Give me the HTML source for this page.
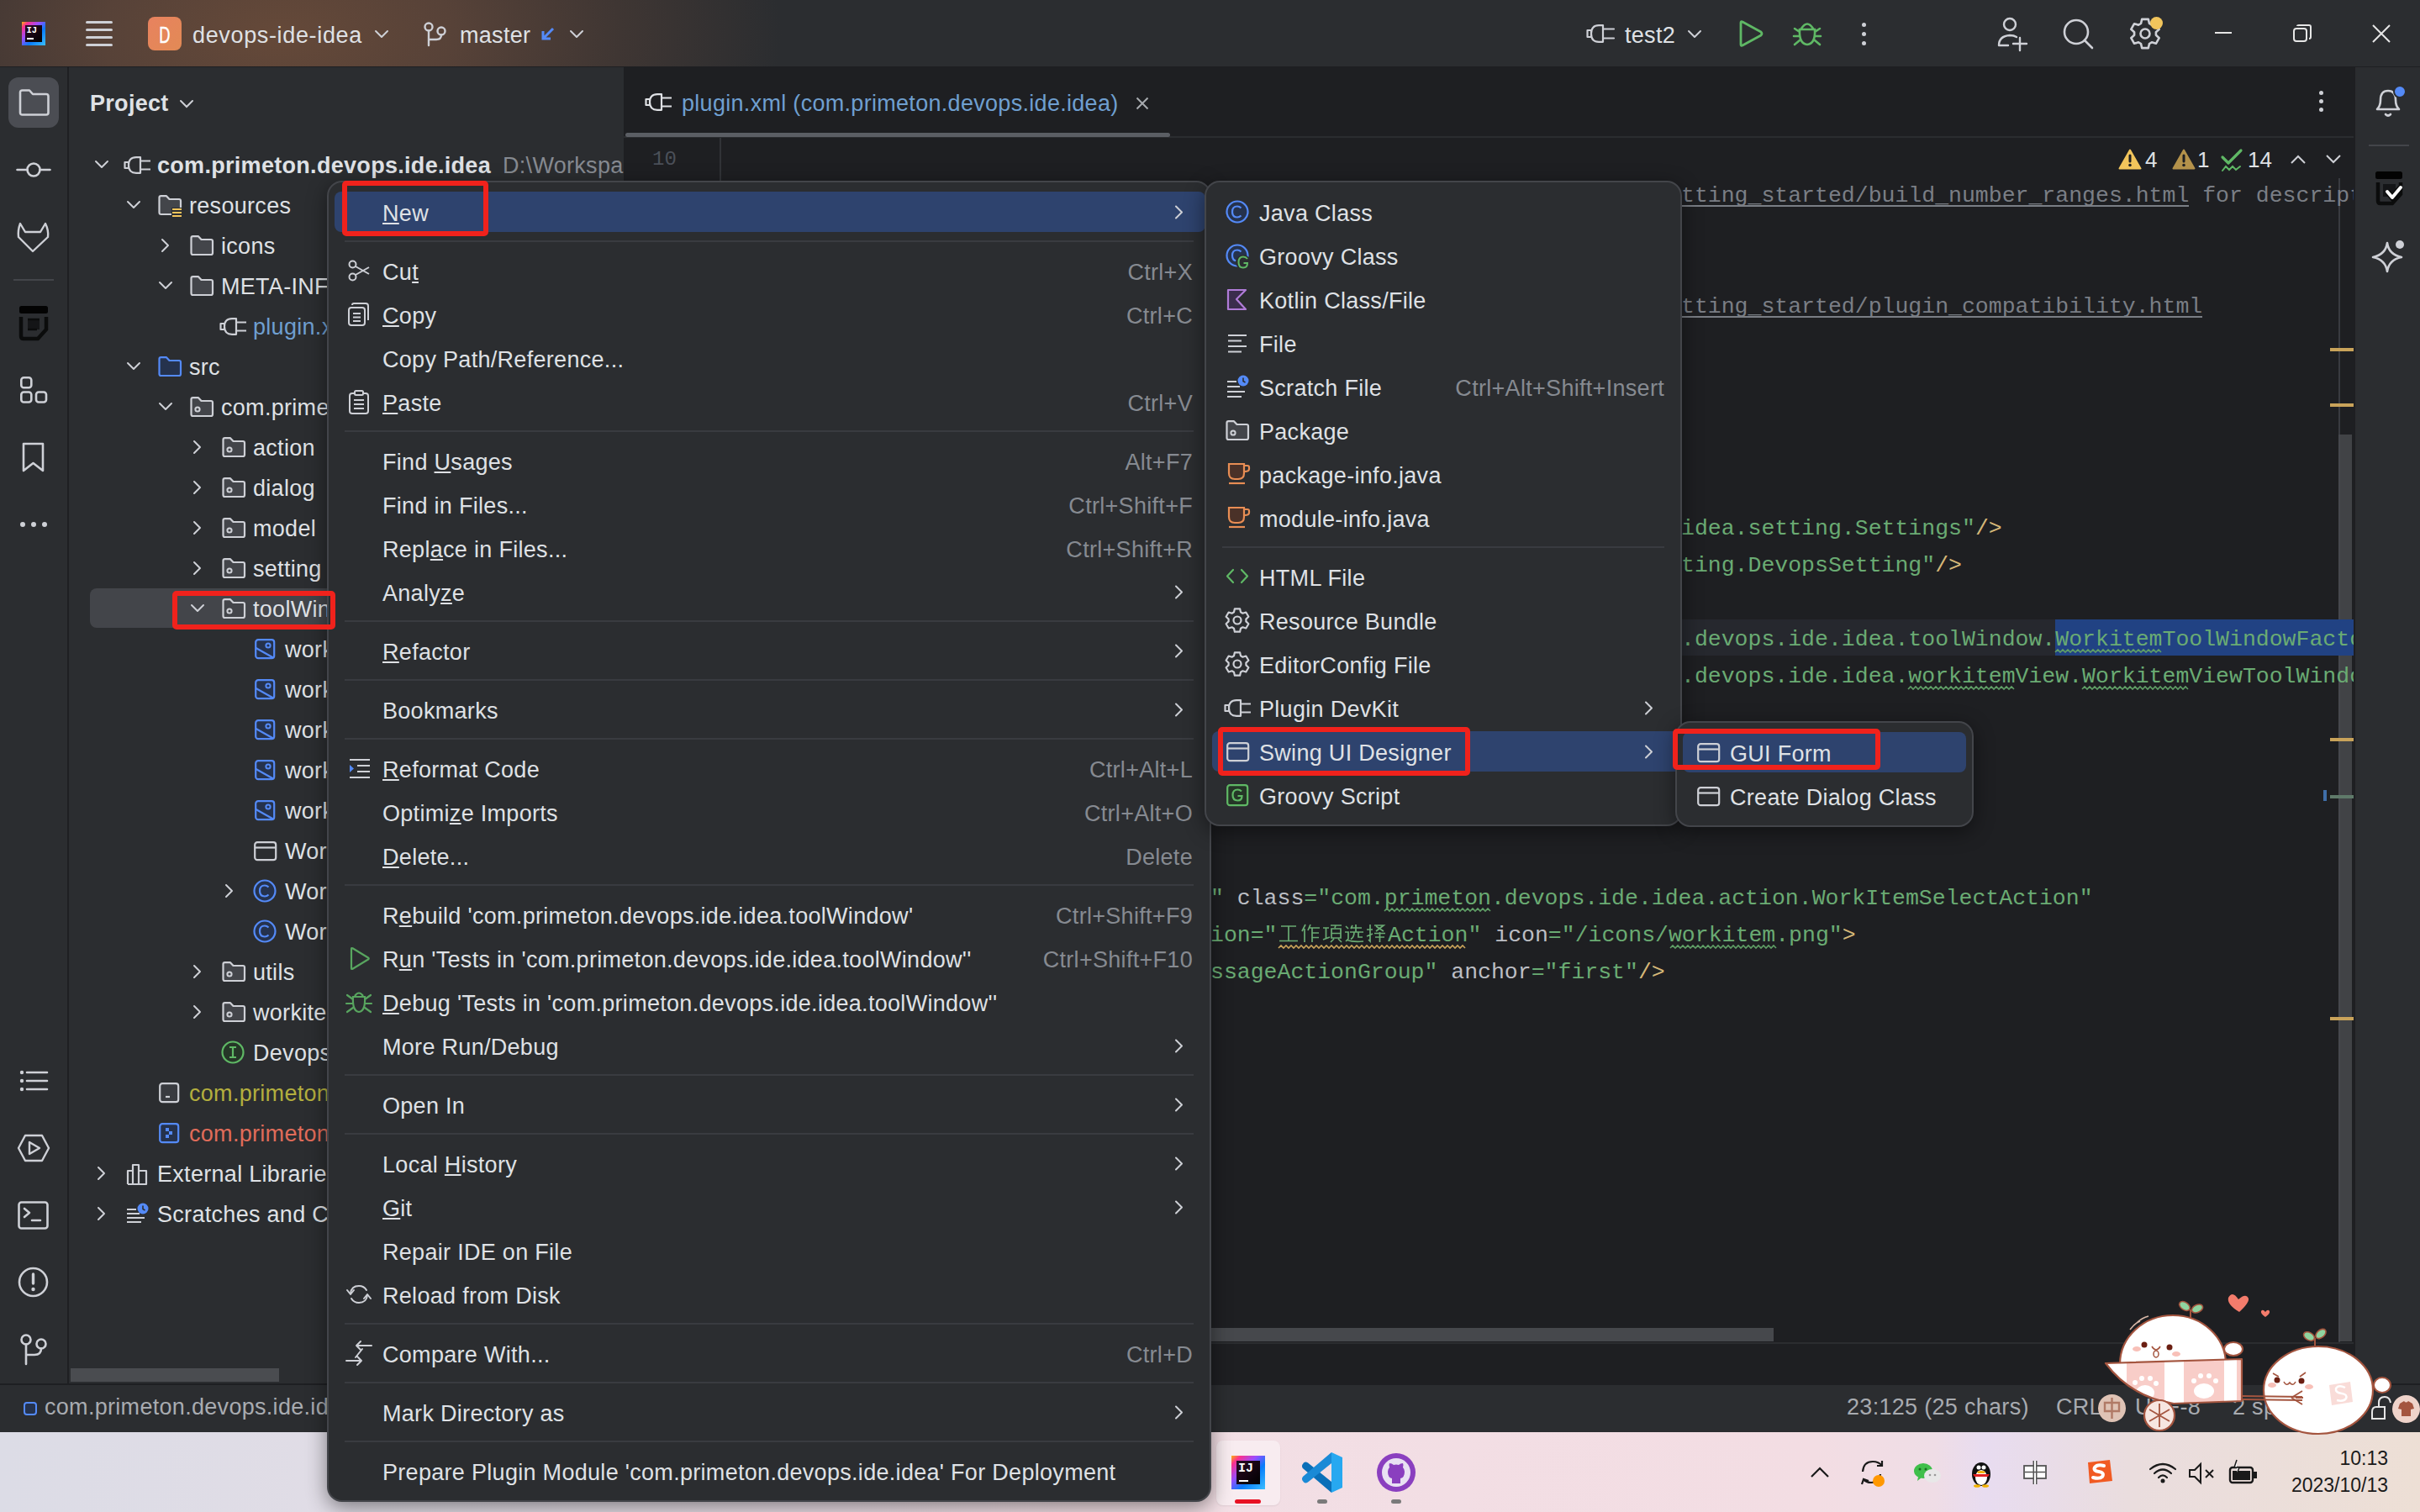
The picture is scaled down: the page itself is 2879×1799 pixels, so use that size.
<!DOCTYPE html>
<html><head><meta charset="utf-8">
<style>
*{box-sizing:border-box;margin:0;padding:0}
html,body{width:2879px;height:1799px;overflow:hidden;background:#2b2d30}
body{position:relative;font-family:"Liberation Sans",sans-serif;color:#dfe1e5;font-size:27px}
.a{position:absolute}
.t{position:absolute;white-space:pre;line-height:1}
.mono{font-family:"Liberation Mono",monospace}
svg{position:absolute;overflow:visible}
.ic{fill:none;stroke:#ced0d6;stroke-width:2.4;stroke-linecap:round;stroke-linejoin:round}
</style></head><body>
<!-- TITLE BAR -->
<div class="a" style="left:0;top:0;width:2879px;height:80px;background:#2b2d30"></div>
<div class="a" style="left:0;top:0;width:1100px;height:80px;background:radial-gradient(ellipse 600px 300px at 330px 40px,#654939 0%,#574238 35%,#3f3633 68%,rgba(43,45,48,0) 100%)"></div>
<div class="a" style="left:0;top:79px;width:2879px;height:1px;background:#1e1f22"></div>
<!-- IJ logo -->
<div class="a" style="left:26px;top:26px;width:28px;height:28px;background:linear-gradient(135deg,#fdb60d 0%,#fc318c 14%,#9b4dff 38%,#087cfa 62%,#3bbfff 100%)"></div>
<div class="a" style="left:30px;top:30px;width:20px;height:20px;background:linear-gradient(135deg,#2a0a24,#000)"></div>
<div class="t mono" style="left:31.5px;top:31px;font-size:10.5px;font-weight:bold;color:#fff">IJ</div>
<div class="a" style="left:32px;top:45px;width:8px;height:2px;background:#fff"></div>
<!-- hamburger -->
<div class="a" style="left:102px;top:25px;width:32px;height:3px;background:#ced0d6;border-radius:2px"></div>
<div class="a" style="left:102px;top:34px;width:32px;height:3px;background:#ced0d6;border-radius:2px"></div>
<div class="a" style="left:102px;top:43px;width:32px;height:3px;background:#ced0d6;border-radius:2px"></div>
<div class="a" style="left:102px;top:52px;width:32px;height:3px;background:#ced0d6;border-radius:2px"></div>
<!-- D badge -->
<div class="a" style="left:176px;top:20px;width:40px;height:40px;border-radius:8px;background:linear-gradient(135deg,#e8825f,#e28a55)"></div>
<div class="t" style="left:176px;top:29px;width:40px;text-align:center;font-size:27px;color:#fff;transform:scaleX(0.68);-webkit-text-stroke:0.4px #fff">D</div>
<div class="t" style="left:229px;top:29px;font-size:27px;color:#dfe1e5;letter-spacing:0.65px">devops-ide-idea</div>
<svg style="left:446px;top:36px" width="16" height="9"><path d="M1 1 L8 8 L15 1" class="ic" style="stroke-width:2"/></svg>
<!-- branch -->
<svg style="left:504px;top:26px" width="28" height="30"><circle cx="6" cy="6" r="4.5" class="ic"/><circle cx="21" cy="11" r="4.5" class="ic"/><path d="M6 10.5 V28 M21 15.5 Q21 21 15 21 H6" class="ic"/></svg>
<div class="t" style="left:547px;top:29px;font-size:27px;letter-spacing:0.3px">master</div>
<svg style="left:643px;top:32px" width="18" height="18"><path d="M15 2 L3 14 M3 5 V14 H12" fill="none" stroke="#548af7" stroke-width="3"/></svg>
<svg style="left:678px;top:36px" width="16" height="9"><path d="M1 1 L8 8 L15 1" class="ic" style="stroke-width:2"/></svg>
<!-- run config -->
<svg style="left:1887px;top:29px" width="34" height="22"><path d="M1.5 7 H6 V15 H1.5 Z M20 1.2 H15 Q6 1.2 6 11 Q6 20.8 15 20.8 H20 Z M20 5.5 H33 M20 16.5 H33" class="ic" style="stroke-width:2.2"/></svg>
<div class="t" style="left:1933px;top:29px;font-size:27px;letter-spacing:0.3px">test2</div>
<svg style="left:2008px;top:36px" width="16" height="9"><path d="M1 1 L8 8 L15 1" class="ic" style="stroke-width:2"/></svg>
<svg style="left:2068px;top:24px" width="30" height="32"><path d="M3 3 Q3 1 5 2 L27 14 Q29 16 27 18 L5 30 Q3 31 3 29 Z" fill="none" stroke="#5fb865" stroke-width="2.8" stroke-linejoin="round"/></svg>
<svg style="left:2133px;top:24px" width="34" height="32"><path d="M10 10 Q17 -1 24 10 M8 11 H26 Q27 28 17 29 Q7 28 8 11 Z M2 10 L8 14 M32 10 L26 14 M1 19 H8 M33 19 H26 M2 29 L8 24 M32 29 L26 24" fill="none" stroke="#5fb865" stroke-width="2.6" stroke-linecap="round"/></svg>
<div class="a" style="left:2215px;top:27px;width:5px;height:5px;border-radius:50%;background:#ced0d6"></div>
<div class="a" style="left:2215px;top:38px;width:5px;height:5px;border-radius:50%;background:#ced0d6"></div>
<div class="a" style="left:2215px;top:49px;width:5px;height:5px;border-radius:50%;background:#ced0d6"></div>
<!-- right icons -->
<svg style="left:2376px;top:21px" width="40" height="40"><circle cx="15" cy="8" r="7" class="ic"/><path d="M2 33 Q2 22 15 21 Q20 21 23 23 M2 33 H13 M27 24 V39 M19 31 H35" class="ic"/></svg>
<svg style="left:2455px;top:23px" width="38" height="38"><circle cx="15" cy="15" r="14" class="ic" style="stroke-width:2.6"/><path d="M25 25 L34 34" class="ic" style="stroke-width:2.6"/></svg>
<svg style="left:2534px;top:21px" width="40" height="40"><path d="M13.0 7.0 L14.2 1.9 L21.8 1.9 L23.0 7.0 L25.9 8.7 L30.9 7.2 L34.7 13.8 L30.9 17.3 L30.9 20.7 L34.7 24.2 L30.9 30.8 L25.9 29.3 L23.0 31.0 L21.8 36.1 L14.2 36.1 L13.0 31.0 L10.1 29.3 L5.1 30.8 L1.3 24.2 L5.1 20.7 L5.1 17.3 L1.3 13.8 L5.1 7.2 L10.1 8.7 Z" class="ic" style="stroke-width:2.6"/><circle cx="18" cy="19" r="5.5" class="ic" style="stroke-width:2.6"/></svg>
<div class="a" style="left:2558px;top:20px;width:15px;height:15px;border-radius:50%;background:#f2c55c"></div>
<div class="a" style="left:2635px;top:38px;width:20px;height:2px;background:#e6e6e6"></div>
<svg style="left:2728px;top:29px" width="24" height="24"><rect x="1" y="5" width="15" height="15" rx="3" fill="none" stroke="#e6e6e6" stroke-width="2"/><path d="M5 2 Q5 1 7 1 H19 Q21 1 21 3 V15 Q21 17 19 17" fill="none" stroke="#e6e6e6" stroke-width="2"/></svg>
<svg style="left:2822px;top:29px" width="22" height="22"><path d="M1 1 L21 21 M21 1 L1 21" stroke="#e6e6e6" stroke-width="2"/></svg>
<div class="a" style="left:0;top:80px;width:80px;height:1570px;background:#2b2d30"></div>
<div class="a" style="left:80px;top:80px;width:2px;height:1570px;background:#1e1f22"></div>
<div class="a" style="left:82px;top:80px;width:660px;height:1570px;background:#2b2d30;overflow:hidden" id="proj">
<div class="a" style="left:25px;top:620px;width:700px;height:47px;background:#43454a;border-radius:8px"></div><svg style="left:31px;top:111px" width="16" height="10"><path d="M1 1 L8 8 L15 1" fill="none" stroke="#ced0d6" stroke-width="2" stroke-linecap="round" stroke-linejoin="round"/></svg><svg style="left:65px;top:106px" width="34" height="22"><path d="M1.5 7 H6 V14 H1.5 Z M20 1.2 H15 Q6 1.2 6 10.5 Q6 19.8 15 19.8 H20 Z M20 5.5 H32 M20 15.5 H32" fill="none" stroke="#ced0d6" stroke-width="2.2" stroke-linejoin="round"/></svg><div class="t" style="left:105px;top:104px;font-size:27px;color:#dfe1e5;letter-spacing:0.3px;font-weight:bold;">com.primeton.devops.ide.idea</div><div class="t" style="left:516px;top:104px;font-size:27px;color:#868a91;letter-spacing:0.3px;">D:\Workspace\devops-ide-idea</div><svg style="left:69px;top:159px" width="16" height="10"><path d="M1 1 L8 8 L15 1" fill="none" stroke="#ced0d6" stroke-width="2" stroke-linecap="round" stroke-linejoin="round"/></svg><svg style="left:106px;top:152px" width="30" height="26"><path d="M1.5 3 Q1.5 1.2 3.5 1.2 H10 L13.5 5 H25 Q27 5 27 7 V21 Q27 23 25 23 H3.5 Q1.5 23 1.5 21 Z" fill="#43454a" stroke="#ced0d6" stroke-width="2.2" stroke-linejoin="round"/><rect x="16" y="15" width="13" height="11" fill="#2b2d30"/><path d="M17 17 H28 M17 21 H28 M17 25 H28" stroke="#f2c55c" stroke-width="2.2"/></svg><div class="t" style="left:143px;top:152px;font-size:27px;color:#dfe1e5;letter-spacing:0.3px;">resources</div><svg style="left:110px;top:204px" width="10" height="16"><path d="M1 1 L8 8 L1 15" fill="none" stroke="#ced0d6" stroke-width="2" stroke-linecap="round" stroke-linejoin="round"/></svg><svg style="left:144px;top:200px" width="30" height="26"><path d="M1.5 3 Q1.5 1.2 3.5 1.2 H10 L13.5 5 H25 Q27 5 27 7 V21 Q27 23 25 23 H3.5 Q1.5 23 1.5 21 Z" fill="#43454a" stroke="#ced0d6" stroke-width="2.2" stroke-linejoin="round"/></svg><div class="t" style="left:181px;top:200px;font-size:27px;color:#dfe1e5;letter-spacing:0.3px;">icons</div><svg style="left:107px;top:255px" width="16" height="10"><path d="M1 1 L8 8 L15 1" fill="none" stroke="#ced0d6" stroke-width="2" stroke-linecap="round" stroke-linejoin="round"/></svg><svg style="left:144px;top:248px" width="30" height="26"><path d="M1.5 3 Q1.5 1.2 3.5 1.2 H10 L13.5 5 H25 Q27 5 27 7 V21 Q27 23 25 23 H3.5 Q1.5 23 1.5 21 Z" fill="#43454a" stroke="#ced0d6" stroke-width="2.2" stroke-linejoin="round"/></svg><div class="t" style="left:181px;top:248px;font-size:27px;color:#dfe1e5;letter-spacing:0.3px;">META-INF</div><svg style="left:179px;top:298px" width="34" height="22"><path d="M1.5 7 H6 V14 H1.5 Z M20 1.2 H15 Q6 1.2 6 10.5 Q6 19.8 15 19.8 H20 Z M20 5.5 H32 M20 15.5 H32" fill="none" stroke="#ced0d6" stroke-width="2.2" stroke-linejoin="round"/></svg><div class="t" style="left:219px;top:296px;font-size:27px;color:#6f9fd0;letter-spacing:0.3px;">plugin.xml</div><svg style="left:69px;top:351px" width="16" height="10"><path d="M1 1 L8 8 L15 1" fill="none" stroke="#ced0d6" stroke-width="2" stroke-linecap="round" stroke-linejoin="round"/></svg><svg style="left:106px;top:344px" width="30" height="26"><path d="M1.5 3 Q1.5 1.2 3.5 1.2 H10 L13.5 5 H25 Q27 5 27 7 V21 Q27 23 25 23 H3.5 Q1.5 23 1.5 21 Z" fill="#25324d" stroke="#548af7" stroke-width="2.2" stroke-linejoin="round"/></svg><div class="t" style="left:143px;top:344px;font-size:27px;color:#dfe1e5;letter-spacing:0.3px;">src</div><svg style="left:107px;top:399px" width="16" height="10"><path d="M1 1 L8 8 L15 1" fill="none" stroke="#ced0d6" stroke-width="2" stroke-linecap="round" stroke-linejoin="round"/></svg><svg style="left:144px;top:392px" width="30" height="26"><path d="M1.5 3 Q1.5 1.2 3.5 1.2 H10 L13.5 5 H25 Q27 5 27 7 V21 Q27 23 25 23 H3.5 Q1.5 23 1.5 21 Z" fill="#43454a" stroke="#ced0d6" stroke-width="2.2" stroke-linejoin="round"/><circle cx="9" cy="15" r="2.6" fill="none" stroke="#ced0d6" stroke-width="2"/></svg><div class="t" style="left:181px;top:392px;font-size:27px;color:#dfe1e5;letter-spacing:0.3px;">com.primeton.devops.ide.idea</div><svg style="left:148px;top:444px" width="10" height="16"><path d="M1 1 L8 8 L1 15" fill="none" stroke="#ced0d6" stroke-width="2" stroke-linecap="round" stroke-linejoin="round"/></svg><svg style="left:182px;top:440px" width="30" height="26"><path d="M1.5 3 Q1.5 1.2 3.5 1.2 H10 L13.5 5 H25 Q27 5 27 7 V21 Q27 23 25 23 H3.5 Q1.5 23 1.5 21 Z" fill="#43454a" stroke="#ced0d6" stroke-width="2.2" stroke-linejoin="round"/><circle cx="9" cy="15" r="2.6" fill="none" stroke="#ced0d6" stroke-width="2"/></svg><div class="t" style="left:219px;top:440px;font-size:27px;color:#dfe1e5;letter-spacing:0.3px;">action</div><svg style="left:148px;top:492px" width="10" height="16"><path d="M1 1 L8 8 L1 15" fill="none" stroke="#ced0d6" stroke-width="2" stroke-linecap="round" stroke-linejoin="round"/></svg><svg style="left:182px;top:488px" width="30" height="26"><path d="M1.5 3 Q1.5 1.2 3.5 1.2 H10 L13.5 5 H25 Q27 5 27 7 V21 Q27 23 25 23 H3.5 Q1.5 23 1.5 21 Z" fill="#43454a" stroke="#ced0d6" stroke-width="2.2" stroke-linejoin="round"/><circle cx="9" cy="15" r="2.6" fill="none" stroke="#ced0d6" stroke-width="2"/></svg><div class="t" style="left:219px;top:488px;font-size:27px;color:#dfe1e5;letter-spacing:0.3px;">dialog</div><svg style="left:148px;top:540px" width="10" height="16"><path d="M1 1 L8 8 L1 15" fill="none" stroke="#ced0d6" stroke-width="2" stroke-linecap="round" stroke-linejoin="round"/></svg><svg style="left:182px;top:536px" width="30" height="26"><path d="M1.5 3 Q1.5 1.2 3.5 1.2 H10 L13.5 5 H25 Q27 5 27 7 V21 Q27 23 25 23 H3.5 Q1.5 23 1.5 21 Z" fill="#43454a" stroke="#ced0d6" stroke-width="2.2" stroke-linejoin="round"/><circle cx="9" cy="15" r="2.6" fill="none" stroke="#ced0d6" stroke-width="2"/></svg><div class="t" style="left:219px;top:536px;font-size:27px;color:#dfe1e5;letter-spacing:0.3px;">model</div><svg style="left:148px;top:588px" width="10" height="16"><path d="M1 1 L8 8 L1 15" fill="none" stroke="#ced0d6" stroke-width="2" stroke-linecap="round" stroke-linejoin="round"/></svg><svg style="left:182px;top:584px" width="30" height="26"><path d="M1.5 3 Q1.5 1.2 3.5 1.2 H10 L13.5 5 H25 Q27 5 27 7 V21 Q27 23 25 23 H3.5 Q1.5 23 1.5 21 Z" fill="#43454a" stroke="#ced0d6" stroke-width="2.2" stroke-linejoin="round"/><circle cx="9" cy="15" r="2.6" fill="none" stroke="#ced0d6" stroke-width="2"/></svg><div class="t" style="left:219px;top:584px;font-size:27px;color:#dfe1e5;letter-spacing:0.3px;">setting</div><svg style="left:145px;top:639px" width="16" height="10"><path d="M1 1 L8 8 L15 1" fill="none" stroke="#ced0d6" stroke-width="2" stroke-linecap="round" stroke-linejoin="round"/></svg><svg style="left:182px;top:632px" width="30" height="26"><path d="M1.5 3 Q1.5 1.2 3.5 1.2 H10 L13.5 5 H25 Q27 5 27 7 V21 Q27 23 25 23 H3.5 Q1.5 23 1.5 21 Z" fill="#43454a" stroke="#ced0d6" stroke-width="2.2" stroke-linejoin="round"/><circle cx="9" cy="15" r="2.6" fill="none" stroke="#ced0d6" stroke-width="2"/></svg><div class="t" style="left:219px;top:632px;font-size:27px;color:#dfe1e5;letter-spacing:0.3px;">toolWindow</div><svg style="left:221px;top:680px" width="26" height="26"><rect x="1.2" y="1.2" width="22" height="22" rx="3" fill="#25324d" stroke="#548af7" stroke-width="2.2"/><circle cx="16" cy="8" r="2.6" fill="none" stroke="#548af7" stroke-width="2"/><path d="M1.5 11 L22 22.5" stroke="#548af7" stroke-width="2.2"/></svg><div class="t" style="left:257px;top:680px;font-size:27px;color:#dfe1e5;letter-spacing:0.3px;">workitem1.png</div><svg style="left:221px;top:728px" width="26" height="26"><rect x="1.2" y="1.2" width="22" height="22" rx="3" fill="#25324d" stroke="#548af7" stroke-width="2.2"/><circle cx="16" cy="8" r="2.6" fill="none" stroke="#548af7" stroke-width="2"/><path d="M1.5 11 L22 22.5" stroke="#548af7" stroke-width="2.2"/></svg><div class="t" style="left:257px;top:728px;font-size:27px;color:#dfe1e5;letter-spacing:0.3px;">workitem2.png</div><svg style="left:221px;top:776px" width="26" height="26"><rect x="1.2" y="1.2" width="22" height="22" rx="3" fill="#25324d" stroke="#548af7" stroke-width="2.2"/><circle cx="16" cy="8" r="2.6" fill="none" stroke="#548af7" stroke-width="2"/><path d="M1.5 11 L22 22.5" stroke="#548af7" stroke-width="2.2"/></svg><div class="t" style="left:257px;top:776px;font-size:27px;color:#dfe1e5;letter-spacing:0.3px;">workitem3.png</div><svg style="left:221px;top:824px" width="26" height="26"><rect x="1.2" y="1.2" width="22" height="22" rx="3" fill="#25324d" stroke="#548af7" stroke-width="2.2"/><circle cx="16" cy="8" r="2.6" fill="none" stroke="#548af7" stroke-width="2"/><path d="M1.5 11 L22 22.5" stroke="#548af7" stroke-width="2.2"/></svg><div class="t" style="left:257px;top:824px;font-size:27px;color:#dfe1e5;letter-spacing:0.3px;">workitem4.png</div><svg style="left:221px;top:872px" width="26" height="26"><rect x="1.2" y="1.2" width="22" height="22" rx="3" fill="#25324d" stroke="#548af7" stroke-width="2.2"/><circle cx="16" cy="8" r="2.6" fill="none" stroke="#548af7" stroke-width="2"/><path d="M1.5 11 L22 22.5" stroke="#548af7" stroke-width="2.2"/></svg><div class="t" style="left:257px;top:872px;font-size:27px;color:#dfe1e5;letter-spacing:0.3px;">workitem5.png</div><svg style="left:220px;top:921px" width="28" height="24"><rect x="1.2" y="1.2" width="25" height="21" rx="3" fill="none" stroke="#ced0d6" stroke-width="2.2"/><path d="M1.5 7.5 H26" stroke="#ced0d6" stroke-width="2.2"/></svg><div class="t" style="left:257px;top:920px;font-size:27px;color:#dfe1e5;letter-spacing:0.3px;">WorkitemToolWindow.form</div><svg style="left:186px;top:972px" width="10" height="16"><path d="M1 1 L8 8 L1 15" fill="none" stroke="#ced0d6" stroke-width="2" stroke-linecap="round" stroke-linejoin="round"/></svg><svg style="left:219px;top:966px" width="28" height="28"><circle cx="14" cy="14" r="12.5" fill="#25324d" stroke="#548af7" stroke-width="2.2"/><path d="M18.5 9.5 Q16.5 7.5 14 7.5 Q8 7.5 8 14 Q8 20.5 14 20.5 Q16.5 20.5 18.5 18.5" fill="none" stroke="#548af7" stroke-width="2.2"/></svg><div class="t" style="left:257px;top:968px;font-size:27px;color:#dfe1e5;letter-spacing:0.3px;">WorkitemToolWindow</div><svg style="left:219px;top:1014px" width="28" height="28"><circle cx="14" cy="14" r="12.5" fill="#25324d" stroke="#548af7" stroke-width="2.2"/><path d="M18.5 9.5 Q16.5 7.5 14 7.5 Q8 7.5 8 14 Q8 20.5 14 20.5 Q16.5 20.5 18.5 18.5" fill="none" stroke="#548af7" stroke-width="2.2"/></svg><div class="t" style="left:257px;top:1016px;font-size:27px;color:#dfe1e5;letter-spacing:0.3px;">WorkitemToolWindowFactory</div><svg style="left:148px;top:1068px" width="10" height="16"><path d="M1 1 L8 8 L1 15" fill="none" stroke="#ced0d6" stroke-width="2" stroke-linecap="round" stroke-linejoin="round"/></svg><svg style="left:182px;top:1064px" width="30" height="26"><path d="M1.5 3 Q1.5 1.2 3.5 1.2 H10 L13.5 5 H25 Q27 5 27 7 V21 Q27 23 25 23 H3.5 Q1.5 23 1.5 21 Z" fill="#43454a" stroke="#ced0d6" stroke-width="2.2" stroke-linejoin="round"/><circle cx="9" cy="15" r="2.6" fill="none" stroke="#ced0d6" stroke-width="2"/></svg><div class="t" style="left:219px;top:1064px;font-size:27px;color:#dfe1e5;letter-spacing:0.3px;">utils</div><svg style="left:148px;top:1116px" width="10" height="16"><path d="M1 1 L8 8 L1 15" fill="none" stroke="#ced0d6" stroke-width="2" stroke-linecap="round" stroke-linejoin="round"/></svg><svg style="left:182px;top:1112px" width="30" height="26"><path d="M1.5 3 Q1.5 1.2 3.5 1.2 H10 L13.5 5 H25 Q27 5 27 7 V21 Q27 23 25 23 H3.5 Q1.5 23 1.5 21 Z" fill="#43454a" stroke="#ced0d6" stroke-width="2.2" stroke-linejoin="round"/><circle cx="9" cy="15" r="2.6" fill="none" stroke="#ced0d6" stroke-width="2"/></svg><div class="t" style="left:219px;top:1112px;font-size:27px;color:#dfe1e5;letter-spacing:0.3px;">workitemView</div><svg style="left:181px;top:1158px" width="28" height="28"><circle cx="14" cy="14" r="12.5" fill="#253627" stroke="#5fb865" stroke-width="2.2"/><path d="M10 8 H18 M10 20 H18 M14 8 V20" stroke="#5fb865" stroke-width="2.2"/></svg><div class="t" style="left:219px;top:1160px;font-size:27px;color:#dfe1e5;letter-spacing:0.3px;">DevopsSetting</div><svg style="left:107px;top:1208px" width="26" height="26"><rect x="1.2" y="1.2" width="22" height="22" rx="3" fill="#393b40" stroke="#ced0d6" stroke-width="2.2"/><path d="M8 17 H13" stroke="#ced0d6" stroke-width="2.2"/></svg><div class="t" style="left:143px;top:1208px;font-size:27px;color:#b3ae3e;letter-spacing:0.3px;">com.primeton.devops.ide.idea.iml</div><svg style="left:107px;top:1256px" width="26" height="26"><rect x="1.2" y="1.2" width="22" height="22" rx="3" fill="#25324d" stroke="#548af7" stroke-width="2.2"/><rect x="8" y="6" width="4" height="4" fill="#548af7"/><rect x="12" y="10" width="4" height="4" fill="#548af7"/><rect x="8" y="14" width="4" height="4" fill="#548af7"/></svg><div class="t" style="left:143px;top:1256px;font-size:27px;color:#e06c5a;letter-spacing:0.3px;">com.primeton.devops.ide.idea.iml</div><svg style="left:34px;top:1308px" width="10" height="16"><path d="M1 1 L8 8 L1 15" fill="none" stroke="#ced0d6" stroke-width="2" stroke-linecap="round" stroke-linejoin="round"/></svg><svg style="left:68px;top:1303px" width="28" height="28"><path d="M2 26 V10 H8 V26 M8 26 V3 H15 V26 M15 26 V10 H24 V26 Z M2 26 H24" fill="none" stroke="#ced0d6" stroke-width="2.2" stroke-linejoin="round"/></svg><div class="t" style="left:105px;top:1304px;font-size:27px;color:#dfe1e5;letter-spacing:0.3px;">External Libraries</div><svg style="left:34px;top:1356px" width="10" height="16"><path d="M1 1 L8 8 L1 15" fill="none" stroke="#ced0d6" stroke-width="2" stroke-linecap="round" stroke-linejoin="round"/></svg><svg style="left:68px;top:1351px" width="30" height="28"><path d="M1 8 H12 M1 13 H16 M1 18 H22 M1 23 H18" stroke="#ced0d6" stroke-width="2.2"/><circle cx="20" cy="7" r="6.5" fill="#548af7"/><path d="M20 3.5 V7.5 L22.5 9" stroke="#2b2d30" stroke-width="1.6" fill="none"/></svg><div class="t" style="left:105px;top:1352px;font-size:27px;color:#dfe1e5;letter-spacing:0.3px;">Scratches and Consoles</div><div class="t" style="left:25px;top:30px;font-size:27px;font-weight:bold;letter-spacing:0.3px;color:#dfe1e5">Project</div><svg style="left:132px;top:39px" width="16" height="10"><path d="M1 1 L8 8 L15 1" fill="none" stroke="#ced0d6" stroke-width="2" stroke-linecap="round"/></svg><div class="a" style="left:2px;top:1548px;width:248px;height:16px;background:#4a4c50"></div>
</div><div class="a" style="left:10px;top:92px;width:60px;height:60px;background:#4b4d53;border-radius:12px"></div>
<svg style="left:22px;top:106px" width="38" height="32"><path d="M2 4 Q2 1.5 4.5 1.5 H13 L17 6 H33 Q35.5 6 35.5 8.5 V28 Q35.5 30.5 33 30.5 H4.5 Q2 30.5 2 28 Z" fill="none" stroke="#ced0d6" stroke-width="2.6" stroke-linejoin="round"/></svg>
<svg style="left:19px;top:192px" width="42" height="20"><circle cx="21" cy="10" r="7.5" fill="none" stroke="#ced0d6" stroke-width="2.6"/><path d="M1.5 10 H13.5 M28.5 10 H40.5" stroke="#ced0d6" stroke-width="2.6" stroke-linecap="round"/></svg>
<svg style="left:21px;top:264px" width="38" height="38"><path d="M3 2 L9 12 H27 L33 2 Q37 10 36 18 L18 35 L1 18 Q0 10 3 2 Z" fill="none" stroke="#ced0d6" stroke-width="2.4" stroke-linejoin="round"/></svg>
<div class="a" style="left:16px;top:332px;width:48px;height:2px;background:#43454a"></div>
<svg style="left:22px;top:363px" width="36" height="42"><rect x="1" y="1" width="34" height="9" rx="2.5" fill="#030303"/><path d="M3 14 V37 Q3 40 6 40 H23 L33 29 V14" stroke="#0b0c0c" stroke-width="4.5" fill="none"/><rect x="11" y="16" width="14" height="13" fill="#141517"/><path d="M11 17 H25 M11 29 H22" stroke="#0b0c0c" stroke-width="2.5"/></svg>
<svg style="left:23px;top:447px" width="36" height="36"><rect x="2.3" y="2.3" width="12" height="12" rx="3" fill="none" stroke="#ced0d6" stroke-width="2.6"/><rect x="2.3" y="19.5" width="12" height="12" rx="3" fill="none" stroke="#ced0d6" stroke-width="2.6"/><rect x="20" y="19.5" width="12" height="12" rx="3" fill="none" stroke="#ced0d6" stroke-width="2.6"/></svg>
<svg style="left:26px;top:526px" width="30" height="38"><path d="M2 2 H25 V34 L13.5 25 L2 34 Z" fill="none" stroke="#ced0d6" stroke-width="2.6" stroke-linejoin="round"/></svg>
<div class="a" style="left:24px;top:621px;width:6px;height:6px;border-radius:50%;background:#ced0d6"></div>
<div class="a" style="left:37px;top:621px;width:6px;height:6px;border-radius:50%;background:#ced0d6"></div>
<div class="a" style="left:50px;top:621px;width:6px;height:6px;border-radius:50%;background:#ced0d6"></div>
<svg style="left:23px;top:1273px" width="36" height="26"><circle cx="3" cy="3" r="2.2" fill="#ced0d6"/><circle cx="3" cy="13" r="2.2" fill="#ced0d6"/><circle cx="3" cy="23" r="2.2" fill="#ced0d6"/><path d="M9 3 H33 M9 13 H33 M9 23 H33" stroke="#ced0d6" stroke-width="2.6" stroke-linecap="round"/></svg>
<svg style="left:20px;top:1349px" width="40" height="36"><path d="M10 2 H30 L38 17 L30 32 H10 L2 17 Z" fill="none" stroke="#ced0d6" stroke-width="2.4" stroke-linejoin="round"/><path d="M15 10 L27 17 L15 24 Z" fill="none" stroke="#ced0d6" stroke-width="2.4" stroke-linejoin="round"/></svg>
<svg style="left:21px;top:1429px" width="38" height="35"><rect x="1.5" y="1.5" width="34" height="31" rx="3" fill="none" stroke="#ced0d6" stroke-width="2.6"/><path d="M8 9 L14 14 L8 19 M17 23 H27" fill="none" stroke="#ced0d6" stroke-width="2.6" stroke-linecap="round" stroke-linejoin="round"/></svg>
<svg style="left:21px;top:1507px" width="38" height="38"><circle cx="18.5" cy="18.5" r="16.5" fill="none" stroke="#ced0d6" stroke-width="2.6"/><path d="M18.5 9 V20" stroke="#ced0d6" stroke-width="3.4" stroke-linecap="round"/><circle cx="18.5" cy="27" r="2.2" fill="#ced0d6"/></svg>
<svg style="left:23px;top:1587px" width="34" height="38"><circle cx="8" cy="7" r="5.5" fill="none" stroke="#ced0d6" stroke-width="2.6"/><circle cx="26" cy="12" r="5.5" fill="none" stroke="#ced0d6" stroke-width="2.6"/><path d="M8 12.5 V36 M26 17.5 Q26 25 18 25 H8" fill="none" stroke="#ced0d6" stroke-width="2.6" stroke-linecap="round"/></svg>
<div class="a" style="left:742px;top:80px;width:2060px;height:1568px;background:#1e1f22"></div>
<div class="a" style="left:742px;top:162px;width:2058px;height:2px;background:#2b2d30"></div>
<div class="a" style="left:744px;top:158px;width:648px;height:5px;background:#5b5e64;border-radius:3px"></div>
<svg style="left:767px;top:111px" width="34" height="22"><path d="M1.5 7 H6 V14 H1.5 Z M20 1.2 H15 Q6 1.2 6 10.5 Q6 19.8 15 19.8 H20 Z M20 5.5 H32 M20 15.5 H32" fill="none" stroke="#dfe1e5" stroke-width="2.2" stroke-linejoin="round"/></svg>
<div class="t" style="left:811px;top:110px;font-size:27px;color:#6f9fd0;letter-spacing:0.3px">plugin.xml (com.primeton.devops.ide.idea)</div>
<svg style="left:1351px;top:115px" width="16" height="16"><path d="M1.5 1.5 L14.5 14.5 M14.5 1.5 L1.5 14.5" stroke="#a8abb0" stroke-width="2"/></svg>
<div class="a" style="left:2759px;top:108px;width:5px;height:5px;border-radius:50%;background:#ced0d6"></div>
<div class="a" style="left:2759px;top:118px;width:5px;height:5px;border-radius:50%;background:#ced0d6"></div>
<div class="a" style="left:2759px;top:128px;width:5px;height:5px;border-radius:50%;background:#ced0d6"></div>
<div class="a" style="left:856px;top:164px;width:2px;height:1434px;background:#313337"></div>
<div class="t mono" style="left:776px;top:178px;font-size:24px;color:#4b5059">10</div>
<div class="a" style="left:2782px;top:212px;width:2px;height:1386px;background:#393b40"></div>
<svg style="left:2520px;top:177px" width="28" height="25"><path d="M14 1.5 L26.5 23.5 H1.5 Z" fill="#f2c55c" stroke="#f2c55c" stroke-width="2" stroke-linejoin="round"/><path d="M14 8 V15" stroke="#1e1f22" stroke-width="3" stroke-linecap="round"/><circle cx="14" cy="19.5" r="1.8" fill="#1e1f22"/></svg>
<div class="t" style="left:2552px;top:177px;font-size:26px;color:#dfe1e5">4</div>
<svg style="left:2584px;top:177px" width="28" height="25"><path d="M14 1.5 L26.5 23.5 H1.5 Z" fill="#b4924b" stroke="#b4924b" stroke-width="2" stroke-linejoin="round"/><path d="M14 8 V15" stroke="#1e1f22" stroke-width="3" stroke-linecap="round"/><circle cx="14" cy="19.5" r="1.8" fill="#1e1f22"/></svg>
<div class="t" style="left:2614px;top:177px;font-size:26px;color:#dfe1e5">1</div>
<svg style="left:2642px;top:177px" width="28" height="28"><path d="M2 10 L9 17 L24 2" fill="none" stroke="#5fb865" stroke-width="3.2" stroke-linecap="round" stroke-linejoin="round"/><path d="M2 26 L6 21 L10 25 L14 21 L18 25 L23 21" fill="none" stroke="#5fb865" stroke-width="2" stroke-linecap="round"/></svg>
<div class="t" style="left:2674px;top:177px;font-size:26px;color:#dfe1e5">14</div>
<svg style="left:2725px;top:184px" width="18" height="11"><path d="M1 10 L9 2 L17 10" fill="none" stroke="#ced0d6" stroke-width="2"/></svg>
<svg style="left:2767px;top:184px" width="18" height="11"><path d="M1 1 L9 9 L17 1" fill="none" stroke="#ced0d6" stroke-width="2"/></svg>
<div class="a" style="left:2782px;top:517px;width:16px;height:1079px;background:#4a4c50;opacity:0.8"></div>
<div class="a" style="left:2772px;top:414px;width:28px;height:4px;background:#c9a35a"></div>
<div class="a" style="left:2772px;top:480px;width:28px;height:4px;background:#c9a35a"></div>
<div class="a" style="left:2772px;top:878px;width:28px;height:4px;background:#c9a35a"></div>
<div class="a" style="left:2772px;top:1210px;width:28px;height:4px;background:#c9a35a"></div>
<div class="a" style="left:2772px;top:946px;width:28px;height:4px;background:#5f7a6a"></div>
<div class="a" style="left:2764px;top:940px;width:4px;height:13px;background:#3f6ea8"></div>
<div class="a" style="left:1440px;top:1580px;width:670px;height:16px;background:#46484c"></div>
<div class="a" style="left:742px;top:1597px;width:2058px;height:2px;background:#2b2d30"></div>
<div class="a" style="left:858px;top:737px;width:1924px;height:43px;background:#26282e"></div>
<div class="a" style="left:2445.2px;top:737px;width:354.8px;height:43px;background:#214283"></div>
<div class="t mono" style="left:2000px;top:220px;font-size:26.5px;width:800px;overflow:hidden;height:34px"><span style="color:#7a7e85">tting_started/build_number_ranges.html for description --&gt;</span></div>
<div class="a" style="left:2000.0px;top:244px;width:604.2px;height:2px;background:#7a7e85"></div>
<div class="t mono" style="left:2000px;top:352px;font-size:26.5px;width:800px;overflow:hidden;height:34px"><span style="color:#7a7e85">tting_started/plugin_compatibility.html</span></div>
<div class="a" style="left:2000.0px;top:376px;width:620.1px;height:2px;background:#7a7e85"></div>
<div class="t mono" style="left:2000px;top:616px;font-size:26.5px;width:800px;overflow:hidden;height:34px"><span style="color:#6aab73">idea.setting.Settings</span><span style="color:#6aab73">"</span><span style="color:#d5b778">/&gt;</span></div>
<div class="t mono" style="left:2000px;top:660px;font-size:26.5px;width:800px;overflow:hidden;height:34px"><span style="color:#6aab73">ting.DevopsSetting</span><span style="color:#6aab73">"</span><span style="color:#d5b778">/&gt;</span></div>
<div class="t mono" style="left:2000px;top:748px;font-size:26.5px;width:800px;overflow:hidden;height:34px"><span style="color:#6aab73">.devops.ide.idea.toolWindow.WorkitemToolWindowFactory"/&gt;</span></div>
<svg style="left:2445.2px;top:773px" width="127.20000000000027" height="5"><path d="M0 3 L3 0 L6 3 L9 0 L12 3 L15 0 L18 3 L21 0 L24 3 L27 0 L30 3 L33 0 L36 3 L39 0 L42 3 L45 0 L48 3 L51 0 L54 3 L57 0 L60 3 L63 0 L66 3 L69 0 L72 3 L75 0 L78 3 L81 0 L84 3 L87 0 L90 3 L93 0 L96 3 L99 0 L102 3 L105 0 L108 3 L111 0 L114 3 L117 0 L120 3 L123 0 L126 3" fill="none" stroke="#5f9e66" stroke-width="1.6"/></svg>
<div class="t mono" style="left:2000px;top:792px;font-size:26.5px;width:800px;overflow:hidden;height:34px"><span style="color:#6aab73">.devops.ide.idea.workitemView.WorkitemViewToolWindowFactory"/&gt;</span></div>
<svg style="left:2270.3px;top:817px" width="127.19999999999982" height="5"><path d="M0 3 L3 0 L6 3 L9 0 L12 3 L15 0 L18 3 L21 0 L24 3 L27 0 L30 3 L33 0 L36 3 L39 0 L42 3 L45 0 L48 3 L51 0 L54 3 L57 0 L60 3 L63 0 L66 3 L69 0 L72 3 L75 0 L78 3 L81 0 L84 3 L87 0 L90 3 L93 0 L96 3 L99 0 L102 3 L105 0 L108 3 L111 0 L114 3 L117 0 L120 3 L123 0 L126 3" fill="none" stroke="#5f9e66" stroke-width="1.6"/></svg>
<svg style="left:2477.0px;top:817px" width="127.19999999999982" height="5"><path d="M0 3 L3 0 L6 3 L9 0 L12 3 L15 0 L18 3 L21 0 L24 3 L27 0 L30 3 L33 0 L36 3 L39 0 L42 3 L45 0 L48 3 L51 0 L54 3 L57 0 L60 3 L63 0 L66 3 L69 0 L72 3 L75 0 L78 3 L81 0 L84 3 L87 0 L90 3 L93 0 L96 3 L99 0 L102 3 L105 0 L108 3 L111 0 L114 3 L117 0 L120 3 L123 0 L126 3" fill="none" stroke="#5f9e66" stroke-width="1.6"/></svg>
<div class="t mono" style="left:1440px;top:1056px;font-size:26.5px;width:1360px;overflow:hidden;height:34px"><span style="color:#6aab73">"</span><span style="color:#bcbec4"> class</span><span style="color:#6aab73">="com.primeton.devops.ide.idea.action.WorkItemSelectAction"</span></div>
<svg style="left:1646.7px;top:1081px" width="127.20000000000005" height="5"><path d="M0 3 L3 0 L6 3 L9 0 L12 3 L15 0 L18 3 L21 0 L24 3 L27 0 L30 3 L33 0 L36 3 L39 0 L42 3 L45 0 L48 3 L51 0 L54 3 L57 0 L60 3 L63 0 L66 3 L69 0 L72 3 L75 0 L78 3 L81 0 L84 3 L87 0 L90 3 L93 0 L96 3 L99 0 L102 3 L105 0 L108 3 L111 0 L114 3 L117 0 L120 3 L123 0 L126 3" fill="none" stroke="#5f9e66" stroke-width="1.6"/></svg>
<div class="t mono" style="left:1440px;top:1100px;font-size:26.5px;width:1360px;overflow:hidden;height:34px"><span style="color:#6aab73">ion="</span></div>
<svg style="left:1521px;top:1099px" width="132" height="24"><g transform="translate(0,0)"><path d="M3 3 H21 M12 3 V20 M1 20.5 H23" stroke="#6aab73" stroke-width="1.7" fill="none"/></g><g transform="translate(26,0)"><path d="M6 1 L2 9 M5 6 V22 M12 1 L9 8 M11 5 H23 M14 5 V22 M14 11 H22 M14 16.5 H22" stroke="#6aab73" stroke-width="1.7" fill="none"/></g><g transform="translate(52,0)"><path d="M1 5 H8 M4.5 5 V17 M1 19 L9 16 M10 2 H23 M16 2 L15 5 M11 6 H22 V17 H11 Z M11 11.5 H22 M14 18 L10 22 M19 18 L23 22" stroke="#6aab73" stroke-width="1.7" fill="none"/></g><g transform="translate(78,0)"><path d="M2 3 L5 6 M1 10 H5 V18 L2 21 M4 19.5 Q10 22 23 21 M10 2 L8 6 M9 5 H21 M14 1 V10 M7 10 H23 M12 10 Q12 16 8 18.5 M17 10 V16 H22" stroke="#6aab73" stroke-width="1.7" fill="none"/></g><g transform="translate(104,0)"><path d="M1 7 H8 M5 1 V21 L3 19 M1 15 L8 12 M10 2 H21 L12 9 M12 3 L21 9 M10 11.5 H23 M11 16 H22 M16.5 10 V22" stroke="#6aab73" stroke-width="1.7" fill="none"/></g></svg>
<div class="t mono" style="left:1651px;top:1100px;font-size:26.5px;width:1149px;overflow:hidden;height:34px"><span style="color:#6aab73">Action"</span><span style="color:#bcbec4"> icon</span><span style="color:#6aab73">="/icons/workitem.png"</span><span style="color:#d5b778">&gt;</span></div>
<svg style="left:1521px;top:1125px" width="225" height="5"><path d="M0 3 L3 0 L6 3 L9 0 L12 3 L15 0 L18 3 L21 0 L24 3 L27 0 L30 3 L33 0 L36 3 L39 0 L42 3 L45 0 L48 3 L51 0 L54 3 L57 0 L60 3 L63 0 L66 3 L69 0 L72 3 L75 0 L78 3 L81 0 L84 3 L87 0 L90 3 L93 0 L96 3 L99 0 L102 3 L105 0 L108 3 L111 0 L114 3 L117 0 L120 3 L123 0 L126 3 L129 0 L132 3 L135 0 L138 3 L141 0 L144 3 L147 0 L150 3 L153 0 L156 3 L159 0 L162 3 L165 0 L168 3 L171 0 L174 3 L177 0 L180 3 L183 0 L186 3 L189 0 L192 3 L195 0 L198 3 L201 0 L204 3 L207 0 L210 3 L213 0 L216 3 L219 0 L222 3" fill="none" stroke="#c9a35a" stroke-width="1.6"/></svg>
<svg style="left:1987px;top:1125px" width="126" height="5"><path d="M0 3 L3 0 L6 3 L9 0 L12 3 L15 0 L18 3 L21 0 L24 3 L27 0 L30 3 L33 0 L36 3 L39 0 L42 3 L45 0 L48 3 L51 0 L54 3 L57 0 L60 3 L63 0 L66 3 L69 0 L72 3 L75 0 L78 3 L81 0 L84 3 L87 0 L90 3 L93 0 L96 3 L99 0 L102 3 L105 0 L108 3 L111 0 L114 3 L117 0 L120 3 L123 0 L126 3" fill="none" stroke="#5f9e66" stroke-width="1.6"/></svg>
<div class="t mono" style="left:1440px;top:1144px;font-size:26.5px;width:1360px;overflow:hidden;height:34px"><span style="color:#6aab73">ssageActionGroup"</span><span style="color:#bcbec4"> anchor</span><span style="color:#6aab73">="first"</span><span style="color:#d5b778">/&gt;</span></div>
<div class="a" style="left:2800px;top:80px;width:2px;height:1568px;background:#1e1f22"></div>
<div class="a" style="left:2802px;top:80px;width:77px;height:1568px;background:#2b2d30"></div>
<svg style="left:2824px;top:103px" width="38" height="40"><path d="M4 27 Q8 23 8 16 Q8 5 17 5 Q26 5 26 16 Q26 23 30 27 Z" fill="none" stroke="#ced0d6" stroke-width="2.6" stroke-linejoin="round"/><path d="M14 33 Q17 36 20 33" fill="none" stroke="#ced0d6" stroke-width="2.6" stroke-linecap="round"/></svg>
<div class="a" style="left:2847px;top:101px;width:16px;height:16px;border-radius:50%;background:#548af7;border:2px solid #2b2d30"></div>
<div class="a" style="left:2818px;top:172px;width:48px;height:2px;background:#43454a"></div>
<svg style="left:2825px;top:203px" width="36" height="42"><rect x="1" y="1" width="32" height="9" rx="2.5" fill="#030303"/><path d="M4 14 V36 Q4 39 7 39 H21 L31 28 V14" stroke="#0b0c0c" stroke-width="4.5" fill="none"/><rect x="10" y="16" width="15" height="15" fill="#141517"/><path d="M15 25 L21 32 L31 20" fill="none" stroke="#0b0c0c" stroke-width="7"/><path d="M15 25 L21 32 L31 20" fill="none" stroke="#fff" stroke-width="4" stroke-linecap="round" stroke-linejoin="round"/></svg>
<svg style="left:2821px;top:287px" width="40" height="38"><path d="M19 2 Q21 16 36 19 Q21 22 19 36 Q17 22 2 19 Q17 16 19 2 Z" fill="none" stroke="#ced0d6" stroke-width="2.6" stroke-linejoin="round"/></svg>
<div class="a" style="left:2850px;top:286px;width:10px;height:10px;border-radius:50%;background:#ced0d6"></div>
<div class="a" style="left:0;top:1646px;width:2879px;height:2px;background:#1e1f22"></div>
<div class="a" style="left:0;top:1648px;width:2879px;height:56px;background:#2b2d30"></div>
<div class="a" style="left:28px;top:1668px;width:16px;height:16px;border:2.5px solid #548af7;border-radius:4px;background:#25324d"></div>
<div class="t" style="left:53px;top:1661px;font-size:27px;color:#a8abb0;letter-spacing:0.3px">com.primeton.devops.ide.idea</div>
<div class="t" style="left:2197px;top:1661px;font-size:27px;color:#a8abb0;letter-spacing:0.3px">23:125 (25 chars)</div>
<div class="t" style="left:2446px;top:1661px;font-size:27px;color:#a8abb0;letter-spacing:0.3px">CRLF</div>
<div class="t" style="left:2540px;top:1661px;font-size:27px;color:#a8abb0;letter-spacing:0.3px">UTF-8</div>
<div class="t" style="left:2656px;top:1661px;font-size:27px;color:#a8abb0;letter-spacing:0.3px">2 spaces</div>
<div class="a" style="left:0;top:1704px;width:2879px;height:95px;background:linear-gradient(90deg,#dcdce6 0%,#e4dde6 25%,#f2dfe5 45%,#f3dde3 75%,#efdde6 80%,#e8dcf0 82%,#eaddde 88%,#eddfd5 100%)"></div>
<div class="a" style="left:1447px;top:1714px;width:76px;height:77px;background:#f8ecf0;border-radius:8px;box-shadow:0 1px 2px rgba(0,0,0,0.08)"></div>
<div class="a" style="left:1465px;top:1732px;width:40px;height:40px;background:linear-gradient(135deg,#fdb60d 0%,#fc318c 14%,#9b4dff 38%,#087cfa 62%,#3bbfff 100%)"></div>
<div class="a" style="left:1471px;top:1738px;width:28px;height:28px;background:linear-gradient(135deg,#2a0a24,#000)"></div>
<div class="t mono" style="left:1473px;top:1740px;font-size:15px;font-weight:bold;color:#fff">IJ</div>
<div class="a" style="left:1474px;top:1761px;width:11px;height:2px;background:#fff"></div>
<div class="a" style="left:1469px;top:1784px;width:31px;height:5px;background:#e81123;border-radius:3px"></div>
<svg style="left:1548px;top:1728px" width="50" height="50"><path d="M36 48 L36 35 L8 12.5 Q5 10.5 3 12.5 L1.5 14.5 Q0 17 2.5 19.5 Z" fill="#0a6fb8"/><path d="M36 0 L36 13 L8 35.5 Q5 37.5 3 35.5 L1.5 33.5 Q0 31 2.5 28.5 Z" fill="#1a8ad6"/><path d="M36 0 L49 6 V42 L36 48 Z" fill="#27a8f0"/></svg>
<div class="a" style="left:1567px;top:1784px;width:12px;height:5px;background:#7a7a7a;border-radius:3px"></div>
<div class="a" style="left:1638px;top:1729px;width:46px;height:46px;border-radius:50%;background:#8a3fbf"></div>
<div class="a" style="left:1644px;top:1735px;width:34px;height:34px;border-radius:50%;background:#e9e1f3"></div>
<svg style="left:1647px;top:1738px" width="28" height="28"><path d="M9 27 V21 Q4 20 4 13 Q4 10 6 8 Q5 5 6 3 Q9 3 11 5 Q14 4 17 5 Q19 3 22 3 Q23 5 22 8 Q24 10 24 13 Q24 20 19 21 V27 Z" fill="#8a3fbf"/></svg>
<div class="a" style="left:1655px;top:1784px;width:12px;height:5px;background:#7a7a7a;border-radius:3px"></div>
<svg style="left:2153px;top:1744px" width="24" height="15"><path d="M2 13 L12 3 L22 13" fill="none" stroke="#1a1a1a" stroke-width="2.2"/></svg>
<svg style="left:2212px;top:1735px" width="36" height="36"><path d="M4 16 Q5 4 16 4 Q23 4 27 9 M27 3 V9 H21 M25 19 Q24 29 14 29 Q8 29 5 25 M3 31 L5 25 L11 27" fill="none" stroke="#1a1a1a" stroke-width="2.2"/><circle cx="23" cy="27" r="7" fill="#ff9800"/></svg>
<svg style="left:2276px;top:1740px" width="36" height="26"><ellipse cx="12" cy="10" rx="11" ry="9" fill="#3fbf4a"/><path d="M6 17 L5 22 L10 18 Z" fill="#3fbf4a"/><circle cx="8" cy="8" r="1.5" fill="#1a6b22"/><circle cx="15" cy="8" r="1.5" fill="#1a6b22"/><ellipse cx="23" cy="16" rx="10" ry="8" fill="#e8e8e8"/><circle cx="20" cy="15" r="1.3" fill="#999"/><circle cx="26" cy="15" r="1.3" fill="#999"/></svg>
<svg style="left:2343px;top:1736px" width="28" height="34"><ellipse cx="14" cy="18" rx="11" ry="14" fill="#111"/><ellipse cx="14" cy="22" rx="7" ry="9" fill="#fff"/><circle cx="11" cy="10" r="2.5" fill="#fff"/><circle cx="17" cy="10" r="2.5" fill="#fff"/><path d="M9 15 Q14 13 19 15 L18 17 H10 Z" fill="#f2b200"/><path d="M4 18 H24 L22 21 H6 Z" fill="#e02020"/><ellipse cx="9" cy="32" rx="4" ry="1.8" fill="#f2b200"/><ellipse cx="19" cy="32" rx="4" ry="1.8" fill="#f2b200"/></svg>
<svg style="left:2406px;top:1736px" width="30" height="32"><rect x="2" y="8" width="26" height="15" fill="#fff" stroke="#555" stroke-width="1.8"/><path d="M15 2 V30" stroke="#555" stroke-width="5"/><path d="M15 2 V30" stroke="#fff" stroke-width="2"/><path d="M3 15.5 H27" stroke="#555" stroke-width="1.5"/></svg>
<svg style="left:2480px;top:1736px" width="34" height="30"><path d="M4 4 L30 1 L33 26 L6 29 Z" fill="#f15a22"/><path d="M23 8 Q15 6 12 10 Q10 14 17 15 Q24 16 21 21 Q18 24 10 22" fill="none" stroke="#fff" stroke-width="4" stroke-linecap="round"/></svg>
<svg style="left:2556px;top:1739px" width="34" height="26"><path d="M2 9 Q17 -3 32 9 M7 14 Q17 5 27 14 M12 19 Q17 14 22 19" fill="none" stroke="#1a1a1a" stroke-width="2.2" stroke-linecap="round"/><circle cx="17" cy="23" r="2.5" fill="#1a1a1a"/></svg>
<svg style="left:2603px;top:1740px" width="34" height="26"><path d="M2 9 H8 L15 2 V24 L8 17 H2 Z" fill="none" stroke="#1a1a1a" stroke-width="2"/><path d="M21 9 L30 18 M30 9 L21 18" stroke="#1a1a1a" stroke-width="2"/></svg>
<svg style="left:2651px;top:1736px" width="36" height="32"><rect x="2" y="10" width="27" height="18" rx="3" fill="none" stroke="#1a1a1a" stroke-width="2.4"/><rect x="5" y="14" width="21" height="11" fill="#1a1a1a"/><rect x="30" y="15" width="4" height="8" fill="#1a1a1a"/><path d="M10 1 L7 10 H13 L10 18" fill="#fff" stroke="#1a1a1a" stroke-width="1.5"/></svg>
<div class="t" style="right:38px;top:1724px;font-size:23px;color:#1a1a1a">10:13</div>
<div class="t" style="right:38px;top:1756px;font-size:23px;color:#1a1a1a">2023/10/13</div><div class="a" style="left:389px;top:215px;width:1052px;height:1572px;background:#2b2d30;border:2px solid #43454a;border-radius:18px;box-shadow:0 6px 24px rgba(0,0,0,0.45)"></div>
<div class="a" style="left:398px;top:228px;width:1036px;height:48px;background:#2e436e;border-radius:8px"></div>
<div class="t" style="left:455px;top:241px;font-size:27px;color:#dfe1e5;letter-spacing:0.3px;"><u>N</u>ew</div>
<svg style="left:1397px;top:244px" width="12" height="18"><path d="M2 1.5 L9 8.5 L2 15.5" fill="none" stroke="#ced0d6" stroke-width="2" stroke-linecap="round" stroke-linejoin="round"/></svg>
<div class="a" style="left:410px;top:286px;width:1010px;height:2px;background:#393b40"></div>
<svg style="left:414px;top:309px" width="28" height="28"><circle cx="5.5" cy="5.5" r="4" fill="none" stroke="#ced0d6" stroke-width="2"/><circle cx="5.5" cy="20.5" r="4" fill="none" stroke="#ced0d6" stroke-width="2"/><path d="M9 8 L25 17 M9 18 L25 9" stroke="#ced0d6" stroke-width="2"/></svg>
<div class="t" style="left:455px;top:311px;font-size:27px;color:#dfe1e5;letter-spacing:0.3px;">Cu<u>t</u></div>
<div class="t" style="right:1460px;top:311px;font-size:27px;color:#868a91;letter-spacing:0.3px">Ctrl+X</div>
<svg style="left:414px;top:360px" width="28" height="28"><rect x="1" y="6" width="19" height="21" rx="3" fill="none" stroke="#ced0d6" stroke-width="2"/><path d="M5 3 Q5 1 7 1 H21 Q24 1 24 4 V21" fill="none" stroke="#ced0d6" stroke-width="2"/><path d="M6 13 H15 M6 17.5 H15 M6 22 H15" stroke="#ced0d6" stroke-width="2"/></svg>
<div class="t" style="left:455px;top:363px;font-size:27px;color:#dfe1e5;letter-spacing:0.3px;"><u>C</u>opy</div>
<div class="t" style="right:1460px;top:363px;font-size:27px;color:#868a91;letter-spacing:0.3px">Ctrl+C</div>
<div class="t" style="left:455px;top:415px;font-size:27px;color:#dfe1e5;letter-spacing:0.3px;">Copy Path/Reference...</div>
<svg style="left:414px;top:464px" width="28" height="30"><rect x="2" y="4" width="22" height="24" rx="3" fill="none" stroke="#ced0d6" stroke-width="2"/><rect x="8" y="1" width="10" height="5" rx="1.5" fill="#2b2d30" stroke="#ced0d6" stroke-width="2"/><path d="M7 12 H19 M7 17 H19 M7 22 H19" stroke="#ced0d6" stroke-width="2"/></svg>
<div class="t" style="left:455px;top:467px;font-size:27px;color:#dfe1e5;letter-spacing:0.3px;"><u>P</u>aste</div>
<div class="t" style="right:1460px;top:467px;font-size:27px;color:#868a91;letter-spacing:0.3px">Ctrl+V</div>
<div class="a" style="left:410px;top:512px;width:1010px;height:2px;background:#393b40"></div>
<div class="t" style="left:455px;top:537px;font-size:27px;color:#dfe1e5;letter-spacing:0.3px;">Find <u>U</u>sages</div>
<div class="t" style="right:1460px;top:537px;font-size:27px;color:#868a91;letter-spacing:0.3px">Alt+F7</div>
<div class="t" style="left:455px;top:589px;font-size:27px;color:#dfe1e5;letter-spacing:0.3px;">Find in Files...</div>
<div class="t" style="right:1460px;top:589px;font-size:27px;color:#868a91;letter-spacing:0.3px">Ctrl+Shift+F</div>
<div class="t" style="left:455px;top:641px;font-size:27px;color:#dfe1e5;letter-spacing:0.3px;">Repl<u>a</u>ce in Files...</div>
<div class="t" style="right:1460px;top:641px;font-size:27px;color:#868a91;letter-spacing:0.3px">Ctrl+Shift+R</div>
<div class="t" style="left:455px;top:693px;font-size:27px;color:#dfe1e5;letter-spacing:0.3px;">Analy<u>z</u>e</div>
<svg style="left:1397px;top:696px" width="12" height="18"><path d="M2 1.5 L9 8.5 L2 15.5" fill="none" stroke="#ced0d6" stroke-width="2" stroke-linecap="round" stroke-linejoin="round"/></svg>
<div class="a" style="left:410px;top:738px;width:1010px;height:2px;background:#393b40"></div>
<div class="t" style="left:455px;top:763px;font-size:27px;color:#dfe1e5;letter-spacing:0.3px;"><u>R</u>efactor</div>
<svg style="left:1397px;top:766px" width="12" height="18"><path d="M2 1.5 L9 8.5 L2 15.5" fill="none" stroke="#ced0d6" stroke-width="2" stroke-linecap="round" stroke-linejoin="round"/></svg>
<div class="a" style="left:410px;top:808px;width:1010px;height:2px;background:#393b40"></div>
<div class="t" style="left:455px;top:833px;font-size:27px;color:#dfe1e5;letter-spacing:0.3px;">Bookmarks</div>
<svg style="left:1397px;top:836px" width="12" height="18"><path d="M2 1.5 L9 8.5 L2 15.5" fill="none" stroke="#ced0d6" stroke-width="2" stroke-linecap="round" stroke-linejoin="round"/></svg>
<div class="a" style="left:410px;top:878px;width:1010px;height:2px;background:#393b40"></div>
<svg style="left:414px;top:902px" width="28" height="26"><path d="M2 2 H26 M11 9 H26 M11 16 H26 M2 23 H26" stroke="#ced0d6" stroke-width="2"/><path d="M2 8 L7 12.5 L2 17 Z" fill="#548af7"/></svg>
<div class="t" style="left:455px;top:903px;font-size:27px;color:#dfe1e5;letter-spacing:0.3px;"><u>R</u>eformat Code</div>
<div class="t" style="right:1460px;top:903px;font-size:27px;color:#868a91;letter-spacing:0.3px">Ctrl+Alt+L</div>
<div class="t" style="left:455px;top:955px;font-size:27px;color:#dfe1e5;letter-spacing:0.3px;">Optimi<u>z</u>e Imports</div>
<div class="t" style="right:1460px;top:955px;font-size:27px;color:#868a91;letter-spacing:0.3px">Ctrl+Alt+O</div>
<div class="t" style="left:455px;top:1007px;font-size:27px;color:#dfe1e5;letter-spacing:0.3px;"><u>D</u>elete...</div>
<div class="t" style="right:1460px;top:1007px;font-size:27px;color:#868a91;letter-spacing:0.3px">Delete</div>
<div class="a" style="left:410px;top:1052px;width:1010px;height:2px;background:#393b40"></div>
<div class="t" style="left:455px;top:1077px;font-size:27px;color:#dfe1e5;letter-spacing:0.3px;">R<u>e</u>build 'com.primeton.devops.ide.idea.toolWindow'</div>
<div class="t" style="right:1460px;top:1077px;font-size:27px;color:#868a91;letter-spacing:0.3px">Ctrl+Shift+F9</div>
<svg style="left:415px;top:1126px" width="28" height="30"><path d="M3 3 Q3 1.5 4.5 2.2 L23 13.5 Q24.5 14.5 23 15.5 L4.5 26.8 Q3 27.5 3 26 Z" fill="none" stroke="#58a55f" stroke-width="2.2" stroke-linejoin="round"/></svg>
<div class="t" style="left:455px;top:1129px;font-size:27px;color:#dfe1e5;letter-spacing:0.3px;">R<u>u</u>n 'Tests in 'com.primeton.devops.ide.idea.toolWindow''</div>
<div class="t" style="right:1460px;top:1129px;font-size:27px;color:#868a91;letter-spacing:0.3px">Ctrl+Shift+F10</div>
<svg style="left:412px;top:1177px" width="30" height="30"><path d="M10 8 Q15 1 20 8 M8 9 H22 Q23 26 15 27 Q7 26 8 9 Z" fill="none" stroke="#58a55f" stroke-width="2.2"/><path d="M1 7 L8 12 M29 7 L22 12 M0 17 H8 M30 17 H22 M1 27 L8 22 M29 27 L22 22" stroke="#58a55f" stroke-width="2.2" stroke-linecap="round"/></svg>
<div class="t" style="left:455px;top:1181px;font-size:27px;color:#dfe1e5;letter-spacing:0.3px;"><u>D</u>ebug 'Tests in 'com.primeton.devops.ide.idea.toolWindow''</div>
<div class="t" style="left:455px;top:1233px;font-size:27px;color:#dfe1e5;letter-spacing:0.3px;">More Run/Debug</div>
<svg style="left:1397px;top:1236px" width="12" height="18"><path d="M2 1.5 L9 8.5 L2 15.5" fill="none" stroke="#ced0d6" stroke-width="2" stroke-linecap="round" stroke-linejoin="round"/></svg>
<div class="a" style="left:410px;top:1278px;width:1010px;height:2px;background:#393b40"></div>
<div class="t" style="left:455px;top:1303px;font-size:27px;color:#dfe1e5;letter-spacing:0.3px;">Open In</div>
<svg style="left:1397px;top:1306px" width="12" height="18"><path d="M2 1.5 L9 8.5 L2 15.5" fill="none" stroke="#ced0d6" stroke-width="2" stroke-linecap="round" stroke-linejoin="round"/></svg>
<div class="a" style="left:410px;top:1348px;width:1010px;height:2px;background:#393b40"></div>
<div class="t" style="left:455px;top:1373px;font-size:27px;color:#dfe1e5;letter-spacing:0.3px;">Local <u>H</u>istory</div>
<svg style="left:1397px;top:1376px" width="12" height="18"><path d="M2 1.5 L9 8.5 L2 15.5" fill="none" stroke="#ced0d6" stroke-width="2" stroke-linecap="round" stroke-linejoin="round"/></svg>
<div class="t" style="left:455px;top:1425px;font-size:27px;color:#dfe1e5;letter-spacing:0.3px;"><u>G</u>it</div>
<svg style="left:1397px;top:1428px" width="12" height="18"><path d="M2 1.5 L9 8.5 L2 15.5" fill="none" stroke="#ced0d6" stroke-width="2" stroke-linecap="round" stroke-linejoin="round"/></svg>
<div class="t" style="left:455px;top:1477px;font-size:27px;color:#dfe1e5;letter-spacing:0.3px;">Repair IDE on File</div>
<svg style="left:412px;top:1526px" width="30" height="28"><path d="M5 13 Q6 4 15 4 Q21 4 24 9 M25 15 Q24 24 15 24 Q9 24 6 19" fill="none" stroke="#ced0d6" stroke-width="2" stroke-linecap="round"/><path d="M1 9 L5 14 L9 9 M21 19 L25 14 L29 19" fill="none" stroke="#ced0d6" stroke-width="2" stroke-linecap="round" stroke-linejoin="round"/></svg>
<div class="t" style="left:455px;top:1529px;font-size:27px;color:#dfe1e5;letter-spacing:0.3px;">Reload from Disk</div>
<div class="a" style="left:410px;top:1574px;width:1010px;height:2px;background:#393b40"></div>
<svg style="left:411px;top:1595px" width="32" height="30"><path d="M13 6 H31 M18 1 L13 6 L18 11 M1 24 H19 M14 19 L19 24 L14 29 M20 10 L12 20" fill="none" stroke="#ced0d6" stroke-width="2" stroke-linecap="round" stroke-linejoin="round"/></svg>
<div class="t" style="left:455px;top:1599px;font-size:27px;color:#dfe1e5;letter-spacing:0.3px;">Compare With...</div>
<div class="t" style="right:1460px;top:1599px;font-size:27px;color:#868a91;letter-spacing:0.3px">Ctrl+D</div>
<div class="a" style="left:410px;top:1644px;width:1010px;height:2px;background:#393b40"></div>
<div class="t" style="left:455px;top:1669px;font-size:27px;color:#dfe1e5;letter-spacing:0.3px;">Mark Directory as</div>
<svg style="left:1397px;top:1672px" width="12" height="18"><path d="M2 1.5 L9 8.5 L2 15.5" fill="none" stroke="#ced0d6" stroke-width="2" stroke-linecap="round" stroke-linejoin="round"/></svg>
<div class="a" style="left:410px;top:1714px;width:1010px;height:2px;background:#393b40"></div>
<div class="t" style="left:455px;top:1739px;font-size:27px;color:#dfe1e5;letter-spacing:0.3px;">Prepare Plugin Module 'com.primeton.devops.ide.idea' For Deployment</div>
<div class="a" style="left:1433px;top:215px;width:568px;height:768px;background:#2b2d30;border:2px solid #43454a;border-radius:18px;box-shadow:0 6px 24px rgba(0,0,0,0.45)"></div>
<svg style="left:1458px;top:238px" width="30" height="30"><circle cx="14" cy="14" r="12.5" fill="#25324d" stroke="#548af7" stroke-width="2.2"/><path d="M18.5 9.5 Q16.5 7.5 14 7.5 Q8 7.5 8 14 Q8 20.5 14 20.5 Q16.5 20.5 18.5 18.5" fill="none" stroke="#548af7" stroke-width="2.2"/></svg>
<div class="t" style="left:1498px;top:241px;font-size:27px;color:#dfe1e5;letter-spacing:0.3px;">Java Class</div>
<svg style="left:1458px;top:290px" width="30" height="30"><circle cx="14" cy="14" r="12.5" fill="#25324d" stroke="#548af7" stroke-width="2.2"/><path d="M18.5 9.5 Q16.5 7.5 14 7.5 Q8 7.5 8 14 Q8 20.5 14 20.5 Q16.5 20.5 18.5 18.5" fill="none" stroke="#548af7" stroke-width="2.2"/></svg>
<svg style="left:1470px;top:303px" width="20" height="20"><circle cx="9" cy="9" r="9" fill="#2b2d30"/><path d="M14 5 Q12 2.5 9 2.5 Q3.5 2.5 3.5 9 Q3.5 15.5 9 15.5 Q14 15.5 14 10 H9.5" fill="none" stroke="#5fb865" stroke-width="2"/></svg>
<div class="t" style="left:1498px;top:293px;font-size:27px;color:#dfe1e5;letter-spacing:0.3px;">Groovy Class</div>
<svg style="left:1459px;top:343px" width="28" height="28"><path d="M2 2 H23 L12 13 L23 25 H2 Z" fill="#3b2d4d" stroke="#b07cd8" stroke-width="2.2" stroke-linejoin="round"/></svg>
<div class="t" style="left:1498px;top:345px;font-size:27px;color:#dfe1e5;letter-spacing:0.3px;">Kotlin Class/File</div>
<svg style="left:1459px;top:396px" width="28" height="26"><path d="M2 3 H24 M2 9.5 H18 M2 16 H24 M2 22.5 H18" stroke="#ced0d6" stroke-width="2"/></svg>
<div class="t" style="left:1498px;top:397px;font-size:27px;color:#dfe1e5;letter-spacing:0.3px;">File</div>
<svg style="left:1459px;top:446px" width="30" height="28"><path d="M1 8 H12 M1 14 H16 M1 20 H22 M1 26 H18" stroke="#ced0d6" stroke-width="2"/><circle cx="20" cy="7" r="6.5" fill="#548af7"/><path d="M20 3.5 V7.5 L22.5 9" stroke="#2b2d30" stroke-width="1.6" fill="none"/></svg>
<div class="t" style="left:1498px;top:449px;font-size:27px;color:#dfe1e5;letter-spacing:0.3px;">Scratch File</div>
<div class="t" style="right:899px;top:449px;font-size:27px;color:#868a91;letter-spacing:0.3px">Ctrl+Alt+Shift+Insert</div>
<svg style="left:1458px;top:500px" width="30" height="26"><path d="M1.5 3 Q1.5 1.2 3.5 1.2 H10 L13.5 5 H25 Q27 5 27 7 V21 Q27 23 25 23 H3.5 Q1.5 23 1.5 21 Z" fill="#43454a" stroke="#ced0d6" stroke-width="2.2" stroke-linejoin="round"/><circle cx="9" cy="15" r="2.6" fill="none" stroke="#ced0d6" stroke-width="2"/></svg>
<div class="t" style="left:1498px;top:501px;font-size:27px;color:#dfe1e5;letter-spacing:0.3px;">Package</div>
<svg style="left:1459px;top:550px" width="30" height="30"><path d="M3 2 H21 V13 Q21 20 14 20 H10 Q3 20 3 13 Z" fill="#4a3128" stroke="#e88d54" stroke-width="2.2"/><path d="M21 4 H25 Q27 4 27 6 V8 Q27 11 22 11" fill="none" stroke="#e88d54" stroke-width="2.2"/><path d="M3 25 H22" stroke="#e88d54" stroke-width="2.2"/></svg>
<div class="t" style="left:1498px;top:553px;font-size:27px;color:#dfe1e5;letter-spacing:0.3px;">package-info.java</div>
<svg style="left:1459px;top:602px" width="30" height="30"><path d="M3 2 H21 V13 Q21 20 14 20 H10 Q3 20 3 13 Z" fill="#4a3128" stroke="#e88d54" stroke-width="2.2"/><path d="M21 4 H25 Q27 4 27 6 V8 Q27 11 22 11" fill="none" stroke="#e88d54" stroke-width="2.2"/><path d="M3 25 H22" stroke="#e88d54" stroke-width="2.2"/></svg>
<div class="t" style="left:1498px;top:605px;font-size:27px;color:#dfe1e5;letter-spacing:0.3px;">module-info.java</div>
<div class="a" style="left:1454px;top:650px;width:526px;height:2px;background:#393b40"></div>
<svg style="left:1458px;top:677px" width="30" height="18"><path d="M9 1 L2 8.5 L9 16 M19 1 L26 8.5 L19 16" fill="none" stroke="#5fb865" stroke-width="2.2" stroke-linecap="round" stroke-linejoin="round"/></svg>
<div class="t" style="left:1498px;top:675px;font-size:27px;color:#dfe1e5;letter-spacing:0.3px;">HTML File</div>
<svg style="left:1457px;top:723px" width="30" height="30"><path d="M11.0 5.3 L11.9 1.3 L18.1 1.3 L19.0 5.3 L21.4 6.7 L25.3 5.5 L28.4 10.8 L25.4 13.6 L25.4 16.4 L28.4 19.2 L25.3 24.5 L21.4 23.3 L19.0 24.7 L18.1 28.7 L11.9 28.7 L11.0 24.7 L8.6 23.3 L4.7 24.5 L1.6 19.2 L4.6 16.4 L4.6 13.6 L1.6 10.8 L4.7 5.5 L8.6 6.7 Z" fill="none" stroke="#ced0d6" stroke-width="2.2" stroke-linejoin="round"/><circle cx="15" cy="15" r="4.5" fill="none" stroke="#ced0d6" stroke-width="2.2"/></svg>
<div class="t" style="left:1498px;top:727px;font-size:27px;color:#dfe1e5;letter-spacing:0.3px;">Resource Bundle</div>
<svg style="left:1457px;top:775px" width="30" height="30"><path d="M11.0 5.3 L11.9 1.3 L18.1 1.3 L19.0 5.3 L21.4 6.7 L25.3 5.5 L28.4 10.8 L25.4 13.6 L25.4 16.4 L28.4 19.2 L25.3 24.5 L21.4 23.3 L19.0 24.7 L18.1 28.7 L11.9 28.7 L11.0 24.7 L8.6 23.3 L4.7 24.5 L1.6 19.2 L4.6 16.4 L4.6 13.6 L1.6 10.8 L4.7 5.5 L8.6 6.7 Z" fill="none" stroke="#ced0d6" stroke-width="2.2" stroke-linejoin="round"/><circle cx="15" cy="15" r="4.5" fill="none" stroke="#ced0d6" stroke-width="2.2"/></svg>
<div class="t" style="left:1498px;top:779px;font-size:27px;color:#dfe1e5;letter-spacing:0.3px;">EditorConfig File</div>
<svg style="left:1456px;top:832px" width="34" height="22"><path d="M1.5 7 H6 V14 H1.5 Z M20 1.2 H15 Q6 1.2 6 10.5 Q6 19.8 15 19.8 H20 Z M20 5.5 H32 M20 15.5 H32" fill="none" stroke="#ced0d6" stroke-width="2.2" stroke-linejoin="round"/></svg>
<div class="t" style="left:1498px;top:831px;font-size:27px;color:#dfe1e5;letter-spacing:0.3px;">Plugin DevKit</div>
<svg style="left:1956px;top:834px" width="12" height="18"><path d="M2 1.5 L9 8.5 L2 15.5" fill="none" stroke="#ced0d6" stroke-width="2" stroke-linecap="round" stroke-linejoin="round"/></svg>
<div class="a" style="left:1442px;top:870px;width:560px;height:48px;background:#2e436e;border-radius:8px 0 0 8px"></div>
<svg style="left:1459px;top:883px" width="28" height="24"><rect x="1.2" y="1.2" width="25" height="21" rx="3" fill="none" stroke="#ced0d6" stroke-width="2.2"/><path d="M1.5 7.5 H26" stroke="#ced0d6" stroke-width="2.2"/></svg>
<div class="t" style="left:1498px;top:883px;font-size:27px;color:#dfe1e5;letter-spacing:0.3px;">Swing UI Designer</div>
<svg style="left:1956px;top:886px" width="12" height="18"><path d="M2 1.5 L9 8.5 L2 15.5" fill="none" stroke="#ced0d6" stroke-width="2" stroke-linecap="round" stroke-linejoin="round"/></svg>
<svg style="left:1459px;top:933px" width="28" height="28"><rect x="1.2" y="1.2" width="24" height="24" rx="3" fill="#253627" stroke="#5fb865" stroke-width="2.2"/><path d="M18 8.5 Q16 6.5 13.5 6.5 Q7.5 6.5 7.5 13 Q7.5 19.5 13.5 19.5 Q18.5 19.5 18.5 14 H13.5" fill="none" stroke="#5fb865" stroke-width="2.2"/></svg>
<div class="t" style="left:1498px;top:935px;font-size:27px;color:#dfe1e5;letter-spacing:0.3px;">Groovy Script</div>
<div class="a" style="left:1993px;top:858px;width:355px;height:126px;background:#2b2d30;border:2px solid #43454a;border-radius:18px;box-shadow:0 6px 24px rgba(0,0,0,0.45)"></div>
<div class="a" style="left:2002px;top:871px;width:337px;height:48px;background:#2e436e;border-radius:8px"></div>
<svg style="left:2019px;top:884px" width="28" height="24"><rect x="1.2" y="1.2" width="25" height="21" rx="3" fill="none" stroke="#ced0d6" stroke-width="2.2"/><path d="M1.5 7.5 H26" stroke="#ced0d6" stroke-width="2.2"/></svg>
<div class="t" style="left:2058px;top:884px;font-size:27px;color:#dfe1e5;letter-spacing:0.3px;">GUI Form</div>
<svg style="left:2019px;top:936px" width="28" height="24"><rect x="1.2" y="1.2" width="25" height="21" rx="3" fill="none" stroke="#ced0d6" stroke-width="2.2"/><path d="M1.5 7.5 H26" stroke="#ced0d6" stroke-width="2.2"/></svg>
<div class="t" style="left:2058px;top:936px;font-size:27px;color:#dfe1e5;letter-spacing:0.3px;">Create Dialog Class</div>
<div class="a" style="left:407px;top:215px;width:174px;height:66px;border:6px solid #f0221c;border-radius:5px"></div>
<div class="a" style="left:205px;top:703px;width:194px;height:46px;border:6px solid #f0221c;border-radius:5px"></div>
<div class="a" style="left:1449px;top:865px;width:300px;height:58px;border:6px solid #f0221c;border-radius:5px"></div>
<div class="a" style="left:1990px;top:867px;width:247px;height:49px;border:6px solid #f0221c;border-radius:5px"></div><svg style="left:2490px;top:1530px" width="389" height="190" viewBox="0 0 389 190">
<defs><clipPath id="bowl"><path d="M15 92 L177 87 L177 137 L96 140 Q45 132 15 92 Z"/></clipPath></defs>
<path d="M44 52 Q50 44 56 42 M52 44 Q58 38 66 36" fill="none" stroke="#d9b8a8" stroke-width="1.5"/>
<path d="M32 93 A63 58 0 0 1 158 93 Z" fill="#fff" stroke="#a4553f" stroke-width="2.2"/>
<ellipse cx="167" cy="75" rx="11" ry="8" fill="#fff" stroke="#a4553f" stroke-width="2"/>
<path d="M116 38 V28" stroke="#a4553f" stroke-width="2"/>
<ellipse cx="109" cy="24" rx="7" ry="4.5" transform="rotate(35 109 24)" fill="#8fd4a0" stroke="#a4553f" stroke-width="1.6"/>
<ellipse cx="124" cy="27" rx="7" ry="4.5" transform="rotate(-25 124 27)" fill="#8fd4a0" stroke="#a4553f" stroke-width="1.6"/>
<path d="M173 16 Q166 5 161 14 Q159 22 174 31 Q186 20 185 15 Q182 8 173 16 Z" fill="#f47c6c"/>
<path d="M205 31 Q202 27 200 30 Q199 33 205 37 Q211 33 210 30 Q208 27 205 31 Z" fill="#f47c6c"/>
<circle cx="61" cy="70" r="3.5" fill="#6b1f12"/><circle cx="91" cy="73" r="3.5" fill="#6b1f12"/>
<path d="M70 72 Q75 80 80 72" fill="none" stroke="#a4553f" stroke-width="1.6"/><ellipse cx="75" cy="81" rx="3" ry="4" fill="#fff" stroke="#a4553f" stroke-width="1.5"/>
<ellipse cx="52" cy="75" rx="5" ry="3" fill="#f8c0b8"/><ellipse cx="99" cy="81" rx="5" ry="3" fill="#f8c0b8"/>
<g clip-path="url(#bowl)">
<rect x="0" y="80" width="200" height="70" fill="#fff"/>
<rect x="40" y="80" width="45" height="70" fill="#f8cdc8"/>
<rect x="108" y="80" width="48" height="70" fill="#f8cdc8"/>
<rect x="171" y="80" width="8" height="70" fill="#f8cdc8"/>
<ellipse cx="62" cy="127" rx="11" ry="9" fill="#fff"/><circle cx="50" cy="115" r="3" fill="#fff"/><circle cx="58" cy="110" r="3" fill="#fff"/><circle cx="68" cy="110" r="3" fill="#fff"/><circle cx="75" cy="116" r="3" fill="#fff"/>
<ellipse cx="132" cy="125" rx="12" ry="9" fill="#fff"/><circle cx="120" cy="113" r="3" fill="#fff"/><circle cx="128" cy="107" r="3" fill="#fff"/><circle cx="138" cy="107" r="3" fill="#fff"/><circle cx="146" cy="113" r="3" fill="#fff"/>
</g>
<path d="M15 92 L177 87 L177 137 L96 140 Q45 132 15 92 Z" fill="none" stroke="#a4553f" stroke-width="2.2" stroke-linejoin="round"/>
<circle cx="22.5" cy="145.5" r="16.5" fill="#dfc3b5"/>
<path d="M14 139 H31 V149 H14 Z M22.5 133 V158" fill="none" stroke="#b07a66" stroke-width="2.4"/>
<circle cx="79" cy="154" r="18" fill="#f7e6e0" stroke="#a4553f" stroke-width="2.2"/>
<path d="M79 140 V168 M67 147 L91 161 M67 161 L91 147" stroke="#a4553f" stroke-width="1.8"/>

<ellipse cx="268" cy="124" rx="65" ry="52" fill="#fff" stroke="#a4553f" stroke-width="2.2"/>
<path d="M177 131 L249 132 M177 135 L249 136" stroke="#a4553f" stroke-width="1.8"/><path d="M236 133 L249 125 M236 133 L249 141 M241 133 H250" fill="none" stroke="#a4553f" stroke-width="1.8"/>
<ellipse cx="344" cy="118" rx="10" ry="9" fill="#fff" stroke="#a4553f" stroke-width="2"/>
<path d="M264 71 V62" stroke="#a4553f" stroke-width="2"/>
<ellipse cx="257" cy="60" rx="7" ry="4.5" transform="rotate(30 257 60)" fill="#8fd4a0" stroke="#a4553f" stroke-width="1.6"/>
<ellipse cx="271" cy="57" rx="7" ry="4.5" transform="rotate(-40 271 57)" fill="#8fd4a0" stroke="#a4553f" stroke-width="1.6"/>
<circle cx="219" cy="112" r="3.5" fill="#6b1f12"/><circle cx="248" cy="113" r="3.5" fill="#6b1f12"/>
<path d="M214 104 L221 108 M253 103 L246 108" stroke="#a4553f" stroke-width="1.6"/>
<path d="M227 114 Q230 120 234 115 Q238 120 241 114" fill="none" stroke="#a4553f" stroke-width="1.6"/>
<ellipse cx="213" cy="118" rx="5" ry="3" fill="#f8c0b8"/><ellipse cx="257" cy="120" rx="5" ry="3" fill="#f8c0b8"/>
<path d="M281 118 L306 114 L309 138 L284 142 Z" fill="#f9dcd8"/>
<path d="M300 121 Q292 117 289 122 Q288 127 296 128 Q303 129 301 134 Q298 138 290 136" fill="none" stroke="#fff" stroke-width="2.5"/>
<path d="M332 158 V150 Q332 144 337 144 H347 V158 Z" fill="none" stroke="#e6e6e6" stroke-width="2"/>
<path d="M340 144 V139 Q340 132 347 132 Q353 132 354 139" fill="none" stroke="#e6e6e6" stroke-width="2"/>
<circle cx="372.5" cy="146.5" r="16.5" fill="#efd3ca"/>
<path d="M365 140 L370 137 Q372.5 140 375 137 L380 140 L382 146 L378 147 V155 H367 V147 L363 146 Z" fill="#a4553f"/>
</svg></body></html>
